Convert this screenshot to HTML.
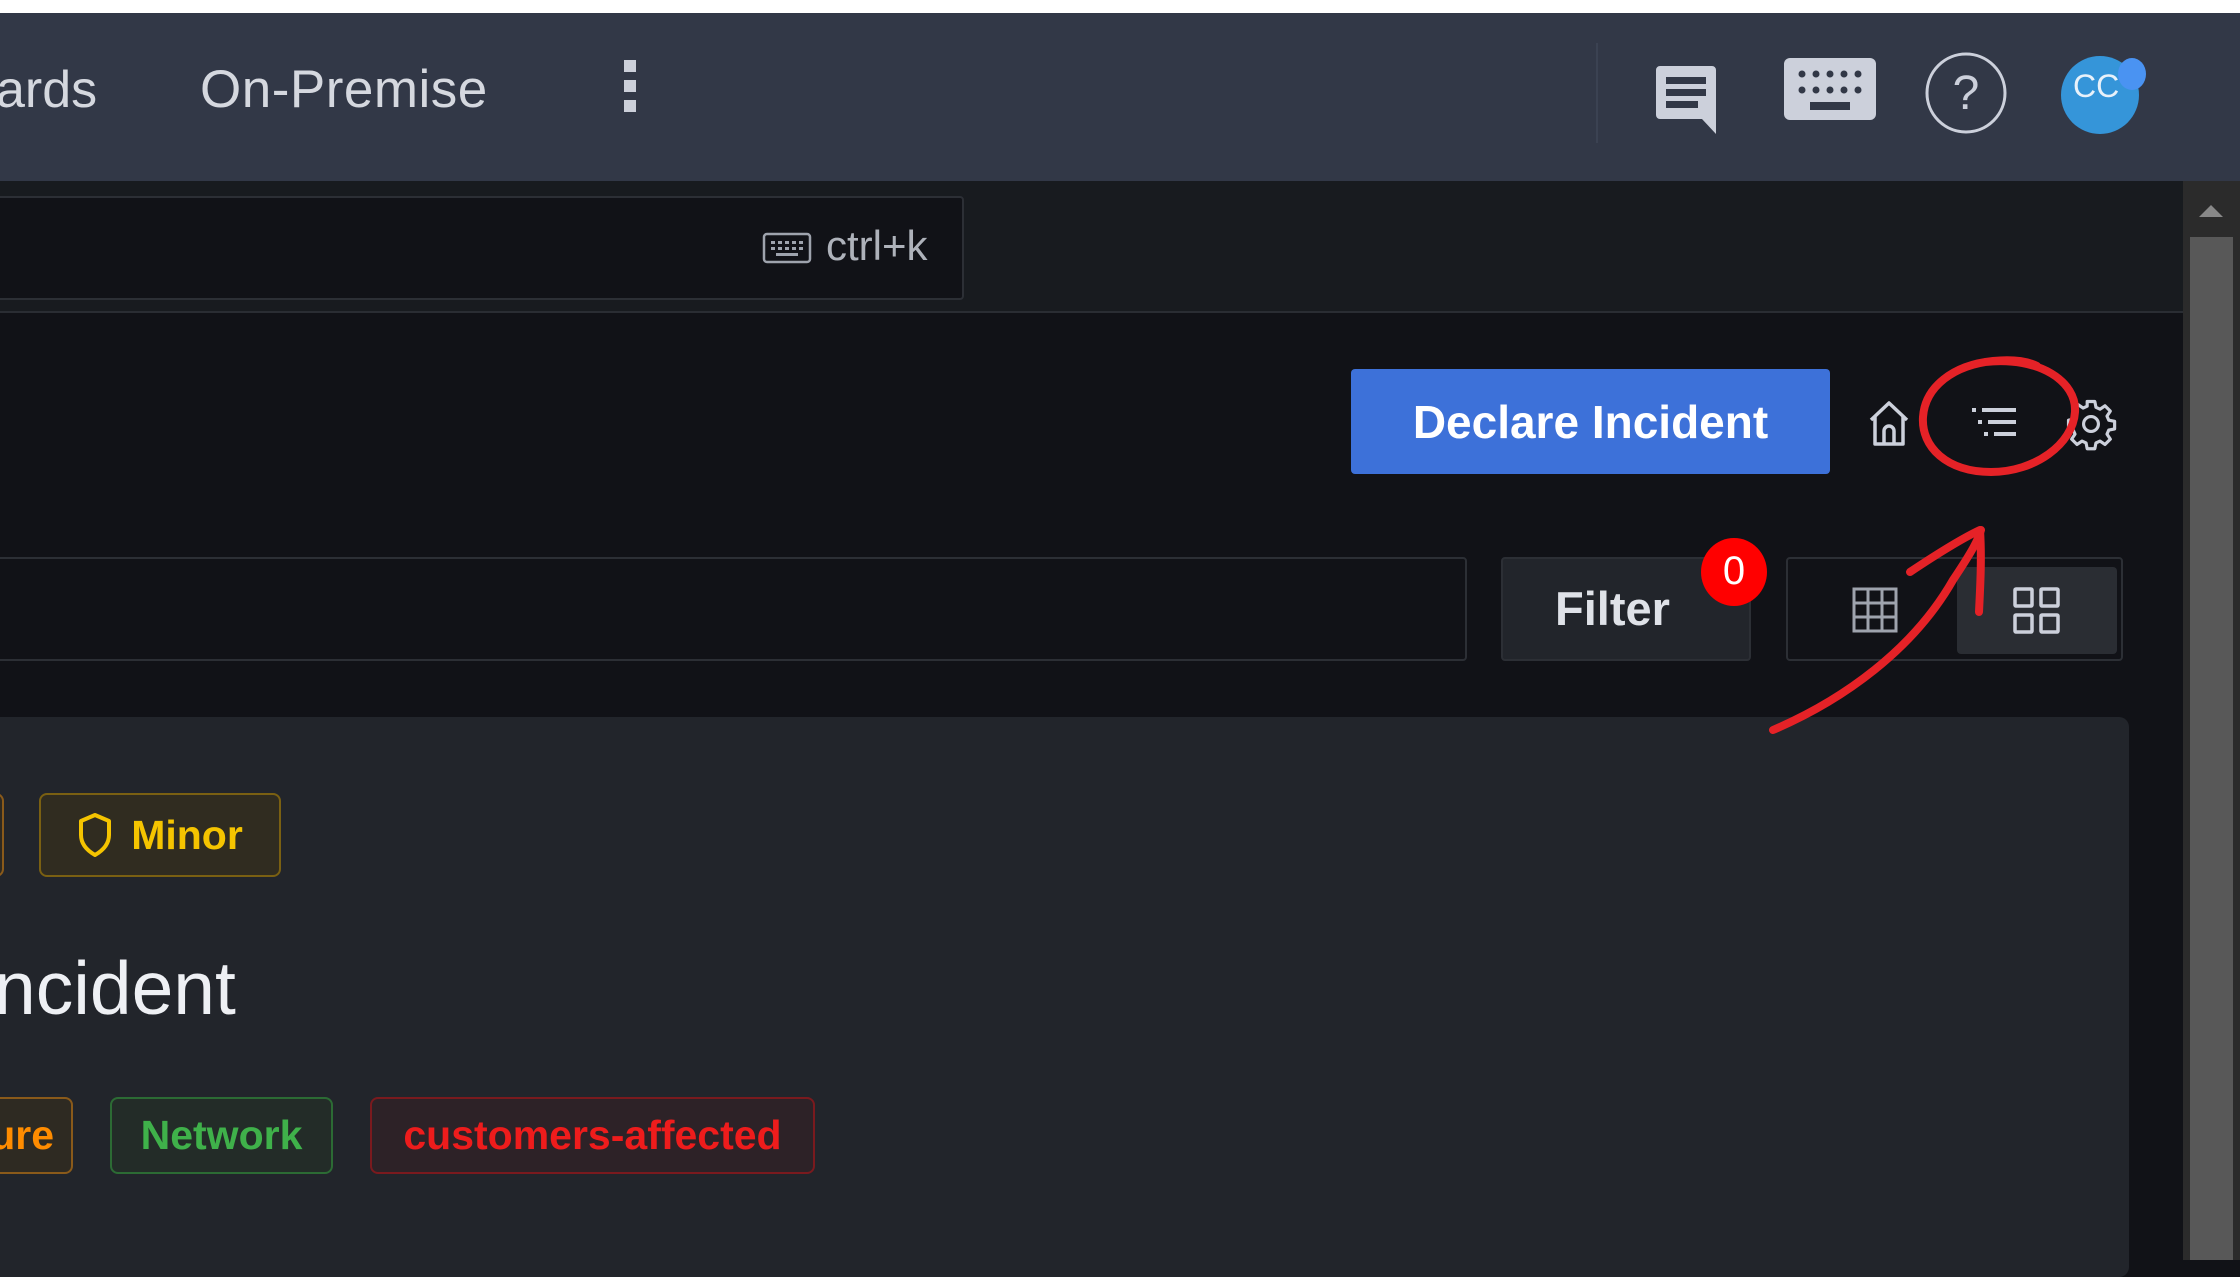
<!DOCTYPE html>
<html><head><style>
*{margin:0;padding:0;box-sizing:border-box}
body{width:2240px;height:1260px;overflow:hidden;background:#111217;font-family:"Liberation Sans",sans-serif;position:relative}
.a{position:absolute}
.tag{position:absolute;border:2px solid;border-radius:8px;display:flex;align-items:center;justify-content:center;font-size:41px;font-weight:bold}
</style></head><body>
<div class="a" style="left:0;top:0;width:2240px;height:13px;background:#fff"></div>
<div class="a" style="left:0;top:13px;width:2240px;height:168px;background:#323847"></div>
<div class="a" style="left:-4px;top:66px;font-size:52px;color:#d5d8df;line-height:48px">ards</div>
<div class="a" style="left:200px;top:66px;font-size:53px;color:#d5d8df;line-height:48px;letter-spacing:0.5px">On-Premise</div>
<div class="a" style="left:624px;top:60px;width:12px;height:58px;background:linear-gradient(#ccd0da 0 12px,transparent 12px) 0 0/12px 20px repeat-y"></div>
<div class="a" style="left:1596px;top:43px;width:2px;height:100px;background:#3b4252"></div>
<svg class="a" style="left:1650px;top:60px" width="80" height="75" viewBox="0 0 80 75"><path d="M10 6h52a4 4 0 0 1 4 4v64l-14-15H10a4 4 0 0 1-4-4V10a4 4 0 0 1 4-4z" fill="#ccd0db"/><rect x="16" y="17" width="40" height="7" fill="#323847"/><rect x="16" y="29" width="40" height="7" fill="#323847"/><rect x="16" y="41" width="32" height="7" fill="#323847"/></svg>
<svg class="a" style="left:1784px;top:58px" width="92" height="64" viewBox="0 0 92 64"><rect x="0" y="0" width="92" height="62" rx="6" fill="#ccd0db"/><g fill="#323847"><circle cx="18" cy="16" r="3.5"/><circle cx="32" cy="16" r="3.5"/><circle cx="46" cy="16" r="3.5"/><circle cx="60" cy="16" r="3.5"/><circle cx="74" cy="16" r="3.5"/><circle cx="18" cy="32" r="3.5"/><circle cx="32" cy="32" r="3.5"/><circle cx="46" cy="32" r="3.5"/><circle cx="60" cy="32" r="3.5"/><circle cx="74" cy="32" r="3.5"/><rect x="26" y="44" width="40" height="8"/></g></svg>
<svg class="a" style="left:1924px;top:51px" width="84" height="84"><ellipse cx="42" cy="42" rx="39" ry="39" fill="none" stroke="#ccd0db" stroke-width="3"/><text x="42" y="58" font-size="48" fill="#ccd0db" text-anchor="middle" font-family="Liberation Sans">?</text></svg>
<div class="a" style="left:2061px;top:56px;width:78px;height:78px;border-radius:50%;background:#3595d9;color:#e8f1fa;font-size:32px;line-height:60px;text-indent:12px">CC</div>
<div class="a" style="left:2118px;top:58px;width:28px;height:32px;border-radius:50%;background:#4a93f2"></div>
<div class="a" style="left:0;top:181px;width:2183px;height:132px;background:#181b1f;border-bottom:2px solid #2a2d33"></div>
<div class="a" style="left:-4px;top:196px;width:968px;height:104px;background:#111217;border:2px solid #2c2f35;border-radius:4px"></div>
<svg class="a" style="left:762px;top:232px" width="50" height="32"><rect x="2" y="2" width="46" height="28" rx="3" fill="none" stroke="#9ea3ad" stroke-width="2.5"/><g fill="#9ea3ad"><rect x="9" y="9" width="4" height="3"/><rect x="16" y="9" width="4" height="3"/><rect x="23" y="9" width="4" height="3"/><rect x="30" y="9" width="4" height="3"/><rect x="37" y="9" width="4" height="3"/><rect x="9" y="15" width="4" height="3"/><rect x="16" y="15" width="4" height="3"/><rect x="23" y="15" width="4" height="3"/><rect x="30" y="15" width="4" height="3"/><rect x="37" y="15" width="4" height="3"/><rect x="14" y="21" width="22" height="3"/></g></svg>
<div class="a" style="left:826px;top:222px;font-size:42px;color:#aeb2ba">ctrl+k</div>
<div class="a" style="left:2183px;top:181px;width:57px;height:1079px;background:#2b2b2b"></div>
<div class="a" style="left:2190px;top:237px;width:43px;height:1023px;background:#585858"></div>
<div class="a" style="left:2199px;top:205px;width:0;height:0;border-left:12px solid transparent;border-right:12px solid transparent;border-bottom:12px solid #888"></div>
<div class="a" style="left:1351px;top:369px;width:479px;height:105px;background:#3d71d9;border-radius:4px;color:#fff;font-size:46px;font-weight:bold;display:flex;align-items:center;justify-content:center">Declare Incident</div>
<svg class="a" style="left:1866px;top:398px" width="46" height="50"><path d="M5 22L23 5l18 17M9 19v27h28V19M18 46V33a5 5 0 0 1 10 0v13" fill="none" stroke="#ccd0db" stroke-width="3.5" stroke-linejoin="round"/></svg>
<svg class="a" style="left:1970px;top:403px" width="50" height="40"><g stroke="#ccd0db" stroke-width="4"><line x1="2" y1="7" x2="6" y2="7"/><line x1="12" y1="7" x2="46" y2="7"/><line x1="8" y1="19" x2="12" y2="19"/><line x1="18" y1="19" x2="46" y2="19"/><line x1="14" y1="31" x2="18" y2="31"/><line x1="24" y1="31" x2="46" y2="31"/></g></svg>
<svg class="a" style="left:2064px;top:397px" width="54" height="54" viewBox="0 0 24 24"><path d="M10.3 2h3.4l.5 2.6 1.8.8 2.2-1.5 2.4 2.4-1.5 2.2.8 1.8 2.6.5v3.4l-2.6.5-.8 1.8 1.5 2.2-2.4 2.4-2.2-1.5-1.8.8-.5 2.6h-3.4l-.5-2.6-1.8-.8-2.2 1.5-2.4-2.4 1.5-2.2-.8-1.8L2 13.7v-3.4l2.6-.5.8-1.8-1.5-2.2 2.4-2.4 2.2 1.5 1.8-.8z" fill="none" stroke="#ccd0db" stroke-width="1.4" stroke-linejoin="round"/><circle cx="12" cy="12" r="3.3" fill="none" stroke="#ccd0db" stroke-width="1.4"/></svg>
<div class="a" style="left:-4px;top:557px;width:1471px;height:104px;background:#111217;border:2px solid #2c2f35;border-radius:4px"></div>
<div class="a" style="left:1501px;top:557px;width:250px;height:104px;background:#22252b;border:2px solid #2c2f35;border-radius:4px;color:#dfe2e8;font-size:47px;font-weight:bold;line-height:100px;padding-left:52px">Filter</div>
<div class="a" style="left:1701px;top:538px;width:66px;height:68px;border-radius:50%;background:#f00;color:#fff;font-size:40px;text-align:center;line-height:66px">0</div>
<div class="a" style="left:1786px;top:557px;width:337px;height:104px;background:#111217;border:2px solid #2c2f35;border-radius:4px"></div>
<div class="a" style="left:1957px;top:567px;width:160px;height:87px;background:#2a2d33;border-radius:4px"></div>
<svg class="a" style="left:1852px;top:587px" width="46" height="46"><g fill="none" stroke="#9ea3ad" stroke-width="3"><rect x="2" y="2" width="42" height="42"/><line x1="16" y1="2" x2="16" y2="44"/><line x1="30" y1="2" x2="30" y2="44"/><line x1="2" y1="16" x2="44" y2="16"/><line x1="2" y1="30" x2="44" y2="30"/></g></svg>
<svg class="a" style="left:2013px;top:587px" width="48" height="48"><g fill="none" stroke="#ccd0db" stroke-width="3.5"><rect x="2" y="2" width="17" height="17" rx="1"/><rect x="28" y="2" width="17" height="17" rx="1"/><rect x="2" y="28" width="17" height="17" rx="1"/><rect x="28" y="28" width="17" height="17" rx="1"/></g></svg>
<div class="a" style="left:-10px;top:717px;width:2139px;height:560px;background:#22252b;border-radius:10px"></div>
<div class="tag" style="left:-20px;top:793px;width:24px;height:84px;border-color:#8a5a1a;background:#2e2a22"></div>
<div class="tag" style="left:39px;top:793px;width:242px;height:84px;border-color:#7a6012;background:#302c20;color:#f5c400"><svg width="36" height="46" style="margin-right:18px"><path d="M18 3l14 6v14c0 10-7 16-14 20C11 39 4 33 4 23V9z" fill="none" stroke="#f5c400" stroke-width="4" stroke-linejoin="round"/></svg>Minor</div>
<div class="a" style="left:-6px;top:945px;font-size:75px;color:#eef0f4">ncident</div>
<div class="tag" style="left:-20px;top:1097px;width:93px;height:77px;border-color:#8a5a1a;background:#2e2a22;color:#ff8c00;justify-content:flex-end;padding-right:17px">ure</div>
<div class="tag" style="left:110px;top:1097px;width:223px;height:77px;border-color:#2c6b34;background:#232c28;color:#3fb14a">Network</div>
<div class="tag" style="left:370px;top:1097px;width:445px;height:77px;border-color:#7a1a1e;background:#2d2227;color:#ee1c1c">customers-affected</div>
<svg class="a" style="left:0;top:0" width="2240" height="1260"><g fill="none" stroke="#e52227" stroke-width="8" stroke-linecap="round" stroke-linejoin="round"><path d="M1985 362c55-6 92 20 90 50-2 32-40 60-84 60-44 0-70-25-68-55 2-30 30-52 70-56 20-2 34 0 44 5"/><path d="M1773 730c70-30 140-80 180-150 20-30 25-40 28-50"/><path d="M1910 572c30-20 55-35 70-42 2 30 0 60 -1 82"/></g></svg>
</body></html>
